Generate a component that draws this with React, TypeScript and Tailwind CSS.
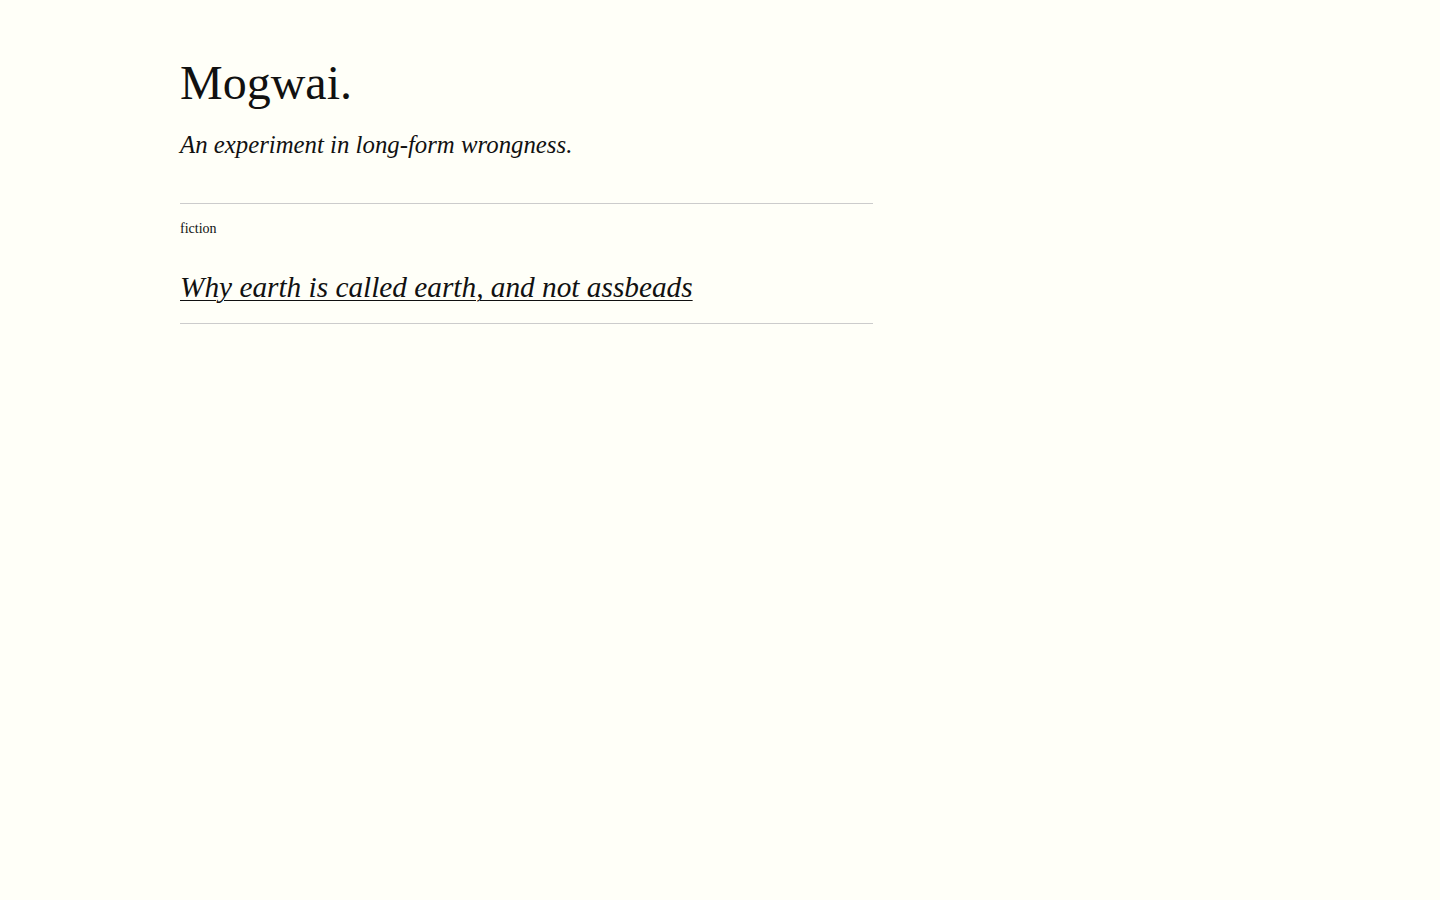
import React from "react";

export default function App() {
  return (
    <div
      className="min-h-screen bg-[#fffff8] text-[#111] pl-[180px]"
      style={{ fontFamily: '"Liberation Serif", "DejaVu Serif", serif' }}
    >
      <div className="w-[693px]">
        <header className="pt-[55px]">
          <h1 className="text-[48px] leading-[48px] font-normal m-0 py-[4px]">Mogwai.</h1>
          <p className="mt-[19px] text-[24.8px] leading-[30px] italic">
            An experiment in long-form wrongness.
          </p>
        </header>

        <div className="mt-[43px] border-t border-[#ccc]">
          <div className="pt-[16px] text-[14px] leading-[18px]">fiction</div>
          <a
            href="#"
            className="block mt-[31px] pb-[18px] text-[29.3px] leading-[36px] italic underline decoration-1 underline-offset-[3px] w-fit"
          >
            Why earth is called earth, and not assbeads
          </a>
        </div>
        <div className="border-t border-[#ccc]" />
      </div>
    </div>
  );
}
